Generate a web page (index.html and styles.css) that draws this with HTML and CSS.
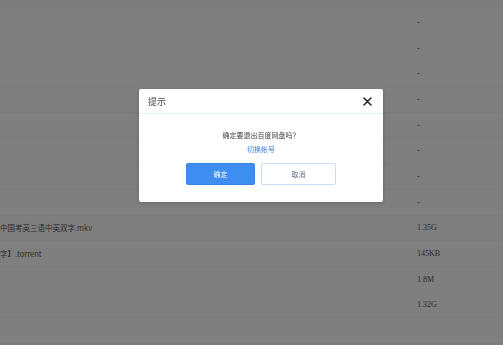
FILE: index.html
```html
<!DOCTYPE html>
<html lang="zh">
<head>
<meta charset="utf-8">
<link rel="stylesheet" href="styles.css">
</head>
<body>
<div class="page">
  <div class="topbar"></div>
  <div class="list">
    <div class="row"><span class="name"></span><span class="size">-</span></div>
    <div class="row"><span class="name"></span><span class="size">-</span></div>
    <div class="row"><span class="name"></span><span class="size">-</span></div>
    <div class="row"><span class="name"></span><span class="size">-</span></div>
    <div class="row"><span class="name"></span><span class="size">-</span></div>
    <div class="row"><span class="name"></span><span class="size">-</span></div>
    <div class="row"><span class="name"></span><span class="size">-</span></div>
    <div class="row"><span class="name"></span><span class="size">-</span></div>
    <div class="row"><span class="name">中国考英三语中英双字.mkv</span><span class="size">1.35G</span></div>
    <div class="row"><span class="name">字】.torrent</span><span class="size">145KB</span></div>
    <div class="row"><span class="name"></span><span class="size">1.8M</span></div>
    <div class="row"><span class="name"></span><span class="size">1.32G</span></div>
    <div class="row"><span class="name"></span><span class="size"></span></div>
  </div>
</div>
<div class="overlay"></div>
<div class="dialog">
  <div class="dialog-head">
    <span class="title">提示</span>
    <svg class="close" width="9" height="9" viewBox="0 0 9 9"><path d="M1 1L8 8M8 1L1 8" stroke="#222" stroke-width="1.5" stroke-linecap="round"/></svg>
  </div>
  <div class="dialog-body">
    <p class="msg">确定要退出百度网盘吗？</p>
    <a class="link">切换帐号</a>
    <div class="actions">
      <button class="btn primary">确定</button>
      <button class="btn secondary">取消</button>
    </div>
  </div>
</div>
</body>
</html>
```
FILE: styles.css
```css
html, body {
  margin: 0;
  padding: 0;
  width: 503px;
  height: 345px;
  overflow: hidden;
  background: #fff;
  font-family: "Noto Sans CJK SC", "Liberation Sans", sans-serif;
}
.page {
  width: 503px;
  height: 345px;
  background: #fff;
}
.topbar {
  height: 4px;
  background: #fafafa;
  border-bottom: 1px solid #f3f4f6;
}
.list {
  padding-top: 5px;
}
.row {
  height: 25.7px;
  box-sizing: border-box;
  border-bottom: 1px solid #f8f8f9;
  display: flex;
  align-items: center;
  font-size: 7.5px;
  color: #555;
}
.name {
  flex: 1;
  margin-left: 0;
  white-space: nowrap;
}
.size {
  width: 86px;
  font-family: "Liberation Serif", serif;
  font-size: 8px;
}
.overlay {
  position: fixed;
  inset: 0;
  background: rgba(0, 0, 0, 0.5);
}
.dialog {
  position: fixed;
  left: 139px;
  top: 89px;
  width: 244px;
  height: 113px;
  background: #fff;
  border-radius: 2px;
  box-shadow: 0 1px 4px rgba(0,0,0,0.2);
  display: flex;
  flex-direction: column;
}
.dialog-head {
  height: 24px;
  border-bottom: 1px solid #e3ebf5;
  display: flex;
  align-items: center;
  justify-content: space-between;
  padding: 0 11px 0 9px;
}
.title {
  font-size: 9px;
  color: #444;
}
.close {
  display: block;
}
.dialog-body {
  display: flex;
  flex-direction: column;
  align-items: center;
  padding-top: 16px;
}
.msg {
  margin: 0;
  font-size: 7px;
  line-height: 10px;
  color: #444;
}
.link {
  margin-top: 4px;
  font-size: 7px;
  line-height: 10px;
  color: #3b82d6;
}
.actions {
  margin-top: 9px;
  display: flex;
  gap: 6px;
}
.btn {
  height: 22px;
  box-sizing: border-box;
  border-radius: 2px;
  font-family: "Noto Sans CJK SC", sans-serif;
  font-size: 7px;
  padding: 0;
}
.primary {
  width: 69px;
  background: #3e8ef2;
  border: 1px solid #3a86e6;
  color: #fff;
}
.secondary {
  width: 75px;
  background: #fff;
  border: 1px solid #c9def5;
  color: #5b6b8c;
}
```
